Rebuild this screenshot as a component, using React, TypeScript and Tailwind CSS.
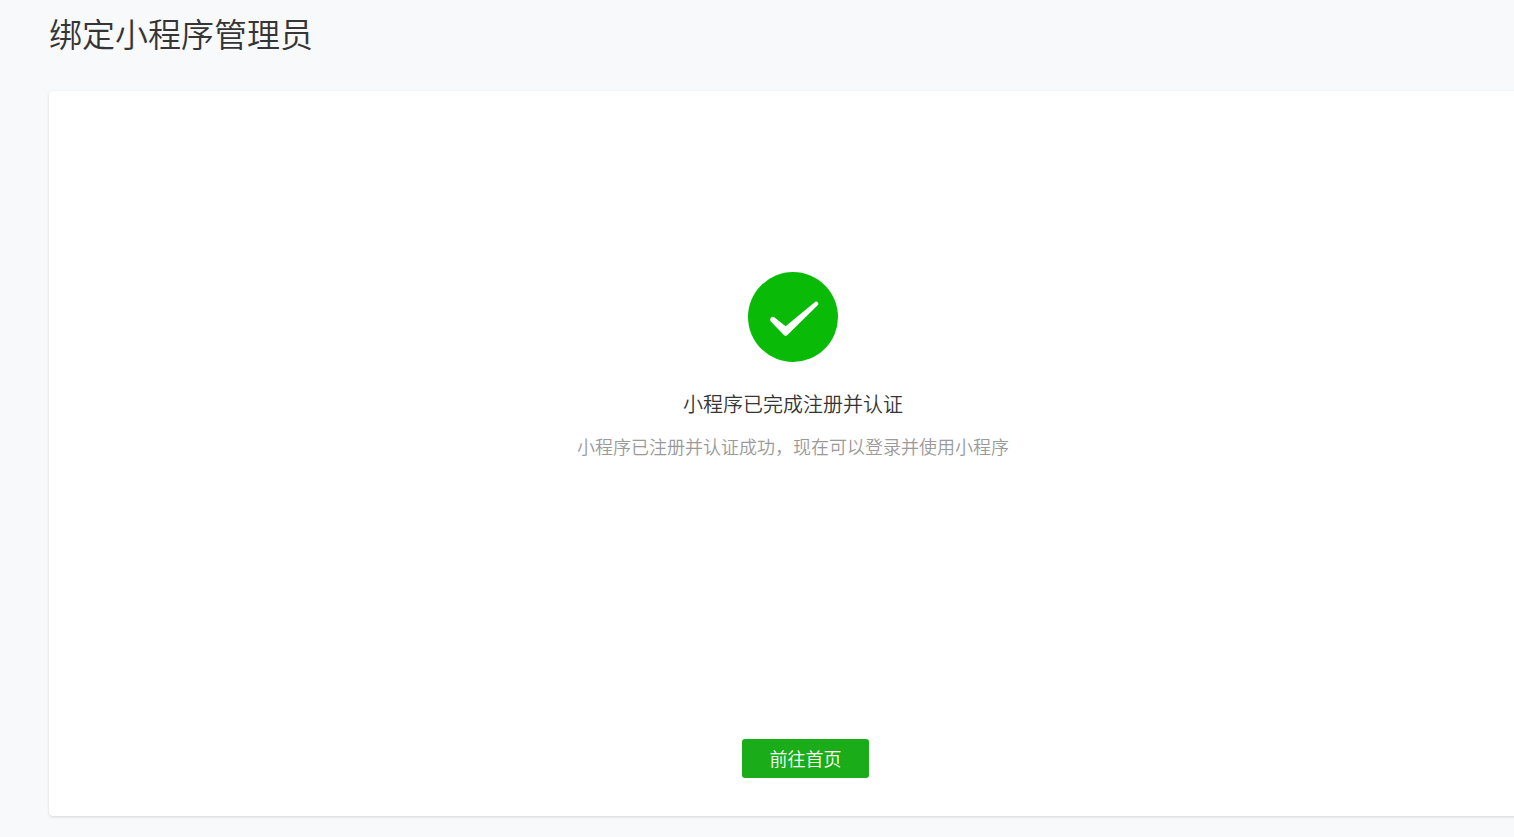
function SuccessIcon() {
  return (
    <svg
      className="size-[90px]"
      viewBox="0 0 90 90"
      role="img"
      aria-label="成功"
    >
      <circle cx="45" cy="45" r="45" fill="#09bb07" />
      <path
        d="M22.800 49.600C21.900 48.600 22 46.600 23 45.600C24 44.600 25.500 44.600 26.600 45.400L37.600 54.200L67 30.100C68 29.300 69.200 29.500 69.900 30.400C70.600 31.300 70.500 32.500 69.700 33.300L39.100 63.200C38.200 64.100 37 64.100 36.100 63.200Z"
        fill="#fff"
      />
    </svg>
  );
}

export default function App() {
  return (
    <div className="min-h-screen overflow-x-hidden bg-[#f8f9fb] pt-[10px] pb-5 pl-[49px] font-['Noto_Sans_CJK_SC',sans-serif] font-[350]">
      <h1 className="text-[33px] leading-[46px] font-[350] text-[#353535]">
        绑定小程序管理员
      </h1>
      {/* the panel runs past the right edge of the window */}
      <main className="mt-[35px] -mr-[23px] flex flex-col items-center rounded-[4px] bg-white pt-[181px] pb-[38px] shadow-[0_1px_3px_rgba(0,0,0,0.15)]">
        <SuccessIcon />
        <h2 className="mt-7 text-[20px] leading-7 font-[350] text-[#353535]">
          小程序已完成注册并认证
        </h2>
        <p className="mt-[14px] text-[18px] leading-7 text-[#9a9a9a]">
          小程序已注册并认证成功，现在可以登录并使用小程序
        </p>
        <button
          type="button"
          className="mt-[279px] ml-[25px] h-[39px] w-[127px] cursor-pointer rounded-[3px] bg-[#1aad19] text-[18px] text-white hover:bg-[#179b16]"
        >
          前往首页
        </button>
      </main>
    </div>
  );
}
